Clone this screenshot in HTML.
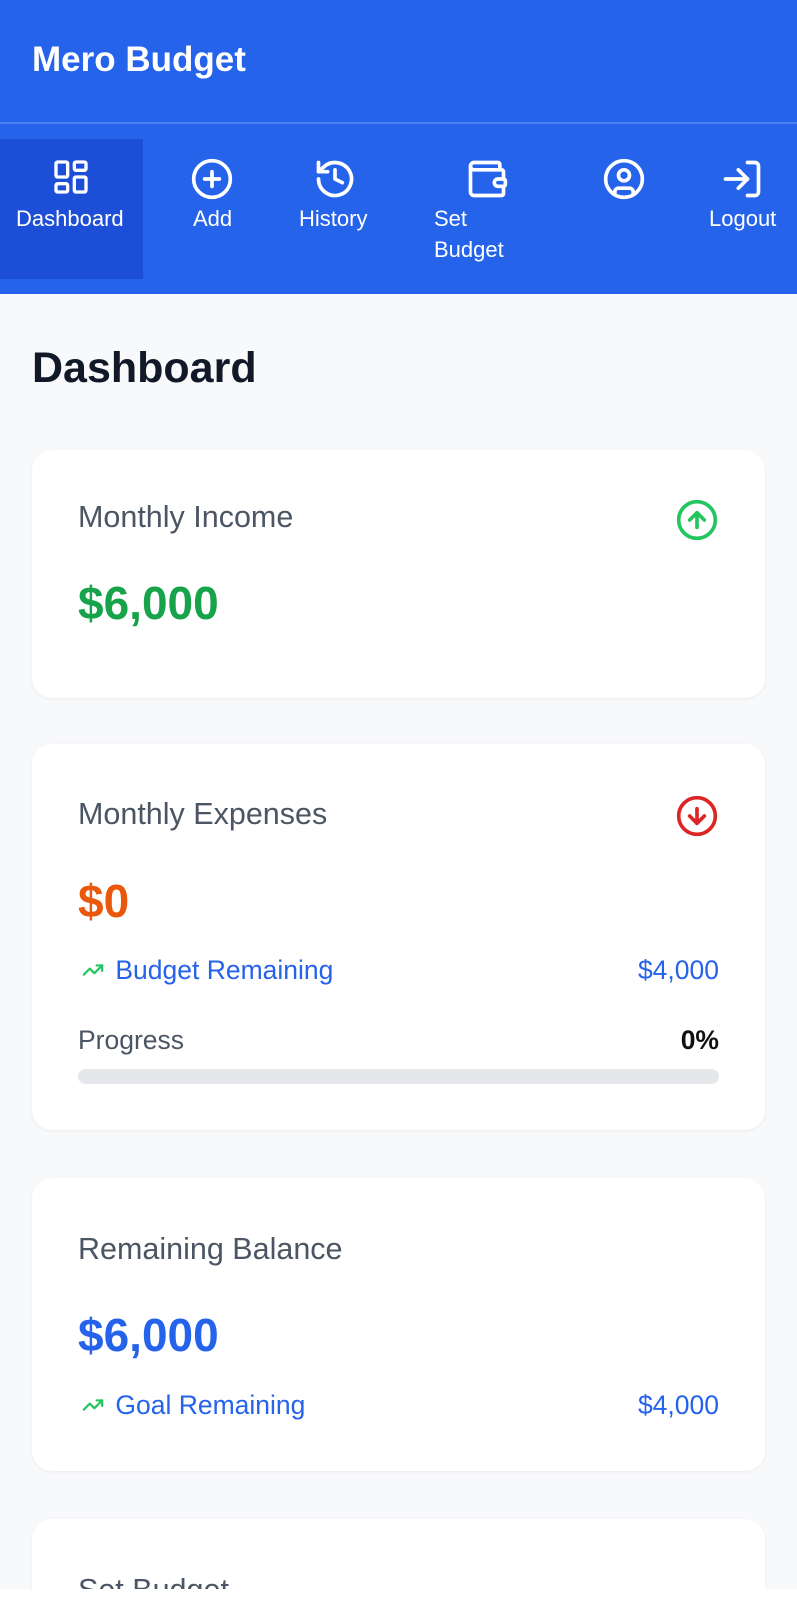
<!DOCTYPE html>
<html><head><meta charset="utf-8"><style>
*{box-sizing:border-box;margin:0;padding:0}
html,body{width:797px;height:1600px;overflow:hidden}
body{background:#fff;font-family:"Liberation Sans",sans-serif}
.page{position:relative;width:797px;height:1589px;background:#f8f9fb;overflow:hidden}
.hdr{position:absolute;left:0;top:0;width:797px;height:294px;background:#2563eb}
.title{position:absolute;left:32px;top:40px;color:#fff;font-size:35px;font-weight:bold}
.line{position:absolute;left:0;top:122px;width:797px;height:2px;background:#4a7ff0}
.nav{position:absolute;top:139px;height:140px;color:#fff;font-size:22px;text-align:center}
.nav.active{background:#1d4ed8}
.nav svg{position:absolute;top:18px}
.nav span{position:absolute;top:64px;white-space:nowrap;line-height:31px}
h1{position:absolute;left:32px;top:344px;font-size:43px;font-weight:bold;color:#111827}
.card{position:absolute;left:32px;width:733px;background:#fff;border-radius:20px;box-shadow:0 1px 3px rgba(0,0,0,.06);overflow:hidden}
.t{position:absolute;left:46px;font-size:30.5px;color:#4b5563;white-space:nowrap}
.v{position:absolute;left:46px;font-size:46px;font-weight:bold}
.row{position:absolute;left:46px;right:46px;font-size:26.5px;color:#2563eb}
.row .r{position:absolute;right:0;top:0}
.ic{position:absolute;right:46px}
</style></head><body><div class="page">
<div class="hdr">
<div class="title">Mero Budget</div>
<div class="line"></div>
<div class="nav active" style="left:0;width:143px"><svg style="left:51px" width="40" height="40" viewBox="0 0 24 24" fill="none" stroke="#fff" stroke-width="2"><rect x="3" y="3" width="7" height="9" rx="1"/><rect x="14" y="3" width="7" height="5" rx="1"/><rect x="14" y="12" width="7" height="9" rx="1"/><rect x="3" y="16" width="7" height="5" rx="1"/></svg><span style="left:16px">Dashboard</span></div>
<div class="nav" style="left:180px;width:64px"><svg style="left:10px" width="44" height="44" viewBox="0 0 24 24" fill="none" stroke="#fff" stroke-width="2" stroke-linecap="round"><circle cx="12" cy="12" r="10"/><path d="M12 8v8M8 12h8"/></svg><span style="left:13px">Add</span></div>
<div class="nav" style="left:295px;width:80px"><svg style="left:18px" width="44" height="44" viewBox="0 0 24 24" fill="none" stroke="#fff" stroke-width="2" stroke-linecap="round" stroke-linejoin="round"><path d="M3 12a9 9 0 1 0 3-6.7L3 8"/><path d="M3 3v5h5"/><path d="M12 7v5l4 2"/></svg><span style="left:4px">History</span></div>
<div class="nav" style="left:430px;width:90px;text-align:left"><svg style="left:35px" width="44" height="44" viewBox="0 0 24 24" fill="none" stroke="#fff" stroke-width="2" stroke-linejoin="round"><path d="M19 7V4a1 1 0 0 0-1-1H5a2 2 0 0 0 0 4h15a1 1 0 0 1 1 1v4h-3a2 2 0 0 0 0 4h3a1 1 0 0 0 1-1v-2a1 1 0 0 0-1-1"/><path d="M3 5v14a2 2 0 0 0 2 2h15a1 1 0 0 0 1-1v-4"/></svg><span style="left:4px">Set<br>Budget</span></div>
<div class="nav" style="left:600px;width:48px"><svg style="left:2px" width="44" height="44" viewBox="0 0 24 24" fill="none" stroke="#fff" stroke-width="2"><circle cx="12" cy="12" r="10"/><circle cx="12" cy="10" r="3"/><path d="M7 20.7v-1.7a2 2 0 0 1 2-2h6a2 2 0 0 1 2 2v1.7"/></svg></div>
<div class="nav" style="left:705px;width:80px"><svg style="left:15px" width="44" height="44" viewBox="0 0 24 24" fill="none" stroke="#fff" stroke-width="2" stroke-linecap="round" stroke-linejoin="round"><path d="M15 3h4a2 2 0 0 1 2 2v14a2 2 0 0 1-2 2h-4"/><path d="M10 17l5-5-5-5"/><path d="M15 12H3"/></svg><span style="left:4px">Logout</span></div>
</div>
<h1>Dashboard</h1>
<div class="card" style="top:450px;height:248px">
<div class="t" style="top:50px">Monthly Income</div>
<div class="v" style="top:126px;color:#16a34a">$6,000</div>
<svg class="ic" style="top:48px" width="44" height="44" viewBox="0 0 24 24" fill="none" stroke="#22c55e" stroke-width="2" stroke-linecap="round" stroke-linejoin="round"><circle cx="12" cy="12" r="10"/><path d="M16 12l-4-4-4 4M12 16V8"/></svg>
</div>
<div class="card" style="top:744px;height:386px">
<div class="t" style="top:53px">Monthly Expenses</div>
<div class="v" style="top:130px;color:#ea580c">$0</div>
<svg class="ic" style="top:50px" width="44" height="44" viewBox="0 0 24 24" fill="none" stroke="#dc2626" stroke-width="2" stroke-linecap="round" stroke-linejoin="round"><circle cx="12" cy="12" r="10"/><path d="M8 12l4 4 4-4M12 8v8"/></svg>
<div class="row" style="top:211px"><svg width="30" height="22" viewBox="0 0 24 24" fill="none" stroke="#22c55e" stroke-width="2.4" stroke-linecap="round" stroke-linejoin="round" style="vertical-align:-2px"><path d="M22 7l-8.5 8.5-5-5L2 17"/><path d="M16 7h6v6"/></svg> Budget Remaining<span class="r">$4,000</span></div>
<div class="row" style="top:281px;color:#4b5563">Progress<span class="r" style="color:#111;font-weight:bold">0%</span></div>
<div style="position:absolute;left:46px;right:46px;top:325px;height:15px;background:#e5e7eb;border-radius:8px"></div>
</div>
<div class="card" style="top:1178px;height:293px">
<div class="t" style="top:54px">Remaining Balance</div>
<div class="v" style="top:130px;color:#2563eb">$6,000</div>
<div class="row" style="top:212px"><svg width="30" height="22" viewBox="0 0 24 24" fill="none" stroke="#22c55e" stroke-width="2.4" stroke-linecap="round" stroke-linejoin="round" style="vertical-align:-2px"><path d="M22 7l-8.5 8.5-5-5L2 17"/><path d="M16 7h6v6"/></svg> Goal Remaining<span class="r">$4,000</span></div>
</div>
<div class="card" style="top:1519px;height:70px;border-radius:20px 20px 0 0">
<div class="t" style="top:54px">Set Budget</div>
</div>
</div></body></html>
